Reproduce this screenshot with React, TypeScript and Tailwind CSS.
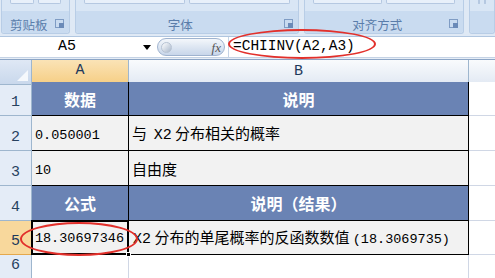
import React from 'react'

const cjk = { fontFamily: '"Noto Sans CJK SC", "Liberation Sans", sans-serif' }
const mono = { fontFamily: '"Liberation Mono", "Noto Sans CJK SC", monospace' }

const Launcher = () => (
  <span className="absolute right-[5px] top-[8px] w-[9px] h-[9px] border border-[#7f9cc4]">
    <span className="absolute right-[-1px] bottom-[-1px] w-[5px] h-[5px] bg-[#6a8ab8]" />
  </span>
)

const Group = ({ label, className, launcher = true }: { label: string; className: string; launcher?: boolean }) => (
  <div className={`flex flex-col h-[34px] border border-[#b8cde6] rounded-b-[3px] border-t-0 bg-[#d9e6f5] ${className}`}>
    <div className="h-[4px] flex gap-1 px-2">
      <div className="flex-1 border border-t-0 border-[#b5c8e1] rounded-b-[2px] bg-[#e8f0fa]" />
      <div className="flex-1 border border-t-0 border-[#b5c8e1] rounded-b-[2px] bg-[#e8f0fa]" />
    </div>
    <div className={`mt-auto h-[22px] flex items-center justify-center pt-[6px] bg-[#c9dbf0] rounded-b-[3px] relative ${launcher ? 'pr-[14px]' : ''}`}>
      <span className="text-[12.5px] leading-none text-[#5a7dab]" style={cjk}>
        {label}
      </span>
      {launcher && <Launcher />}
    </div>
  </div>
)

const Row = ({ n, h, sel, children }: { n?: number; h: string; sel?: boolean; children?: React.ReactNode }) => (
  <div className={`grid grid-cols-[32px_97px_340px_1fr] ${h}`}>
    <div
      className={`border-r border-b flex items-end justify-center pb-[1px] text-[15px] ${
        sel ? 'bg-[#f8d89c] border-[#e4a84c] text-[#1e395b]' : 'bg-[#e4ecf7] border-[#9eb6ce] text-[#27415f]'
      }`}
      style={mono}
    >
      {n}
    </div>
    {children}
    <div className="border-b border-[#d0d7e5] bg-white" />
  </div>
)

const Head = ({ text }: { text: string }) => (
  <div className="bg-[#6a83b4] border-r border-b border-black flex items-center justify-center text-white font-bold text-[16px]" style={cjk}>
    {text}
  </div>
)

const Cell = ({ children, className = '' }: { children?: React.ReactNode; className?: string }) => (
  <div className={`bg-[#f2f2f2] border-r border-b border-black flex items-center pl-[3px] pt-[3px] text-[15px] text-black whitespace-nowrap overflow-hidden ${className}`} style={cjk}>
    <span>{children}</span>
  </div>
)

const Num = ({ children, size = 'text-[13.5px]' }: { children: React.ReactNode; size?: string }) => (
  <span className={size} style={mono}>{children}</span>
)

const App = () => {
  return (
    <div className="w-[495px] h-[278px] overflow-hidden bg-white relative">
      {/* ribbon */}
      <div className="h-[37px] bg-[#dfe9f5] flex gap-[5px] pl-[1px] border-b border-[#b0c6e0]">
        <Group label="剪贴板" className="w-[72px]" />
        <Group label="字体" className="w-[233px]" />
        <Group label="对齐方式" className="w-[166px]" />
        <Group label="" className="flex-1" launcher={false} />
      </div>

      {/* formula bar */}
      <div className="h-[21px] flex items-center bg-white border-b border-[#c5d3e5]">
        <div className="w-[157px] h-full flex items-center relative">
          <span className="absolute left-[58px] text-[15px] text-black" style={mono}>A5</span>
          <span className="ml-auto mr-[6px] w-0 h-0 border-l-[4px] border-r-[4px] border-t-[5px] border-l-transparent border-r-transparent border-t-black" />
        </div>
        <div className="w-[68px] h-[18px] rounded-full border border-[#9fb3cf] bg-gradient-to-b from-[#f4f7fb] via-[#dde6f2] to-[#c8d6ea] flex items-center pl-[3px] pr-[3px]">
          <span className="w-[11px] h-[11px] rounded-full bg-gradient-to-br from-white to-[#a9b8cc] border border-[#b7c3d3]" />
          <span className="ml-auto italic text-[13px] text-[#555] leading-none" style={{ fontFamily: '"Liberation Serif", serif' }}>
            fx
          </span>
        </div>
        <div className="w-[1px] h-full bg-[#c5d3e5] ml-[3px]" />
        <span className="ml-[4px] text-[14.5px] text-black" style={mono}>=CHIINV(A2,A3)</span>
      </div>
      <div className="h-[1px] bg-[#e6edf6]" />
      <div className="h-[1px] bg-[#8ca5c6]" />

      {/* column headers */}
      <div className="grid grid-cols-[32px_97px_340px_1fr] h-[22px]">
        <div className="bg-gradient-to-b from-[#dfe8f5] to-[#c9d8ec] border-r border-b border-[#9eb6ce] relative">
          <span className="absolute right-[3px] bottom-[3px] w-0 h-0 border-b-[11px] border-l-[11px] border-b-[#f5f8fc] border-l-transparent" />
        </div>
        <div className="bg-gradient-to-b from-[#fae3b6] to-[#f6cf86] border-r border-[#9eb6ce] border-b-2 border-b-[#f29536] flex items-center justify-center text-[15px] text-[#1e395b]" style={mono}>
          A
        </div>
        <div className="bg-gradient-to-b from-[#f9fbfd] to-[#e2e9f3] border-r border-b border-[#9eb6ce] flex items-center justify-center text-[15px] text-[#1e395b]" style={mono}>
          B
        </div>
        <div className="bg-gradient-to-b from-[#f9fbfd] to-[#e2e9f3] border-b border-[#9eb6ce]" />
      </div>

      {/* rows */}
      <Row n={1} h="h-[34px]">
        <Head text="数据" />
        <Head text="说明" />
      </Row>
      <Row n={2} h="h-[35px]">
        <Cell><Num>0.050001</Num></Cell>
        <Cell>与&nbsp;&nbsp;<Num size="text-[15px]">Χ2</Num> 分布相关的概率</Cell>
      </Row>
      <Row n={3} h="h-[35px]">
        <Cell><Num>10</Num></Cell>
        <Cell>自由度</Cell>
      </Row>
      <Row n={4} h="h-[35px]">
        <Head text="公式" />
        <Head text="说明（结果）" />
      </Row>
      <Row n={5} h="h-[34px]" sel>
        <div className="bg-[#f2f2f2] border-2 border-black flex items-center justify-end pr-[3px] pt-[3px] relative -ml-[1px] -mt-[1px]">
          <Num>18.30697346</Num>
          <span className="absolute right-[-4px] bottom-[-4px] w-[5px] h-[5px] bg-black border border-white" />
        </div>
        <Cell className="pl-[4px]">
          <Num size="text-[15px]">Χ2</Num> 分布的单尾概率的反函数数值 <Num>(18.3069735)</Num>
        </Cell>
      </Row>
      <Row n={6} h="h-[21px]">
        <div className="border-r border-b border-[#d0d7e5]" />
        <div className="border-r border-b border-[#d0d7e5]" />
      </Row>
      <Row h="h-[10px]">
        <div className="border-r border-[#d0d7e5]" />
        <div className="border-r border-[#d0d7e5]" />
      </Row>

      {/* red annotation ellipses */}
      <div className="absolute left-[228px] top-[29px] w-[148px] h-[30px] rounded-[50%] border-2 border-[#e2302b] pointer-events-none" />
      <div className="absolute left-[20px] top-[222px] w-[118px] h-[34px] rounded-[50%] border-2 border-[#e2302b] pointer-events-none" />
    </div>
  )
}

export default App
